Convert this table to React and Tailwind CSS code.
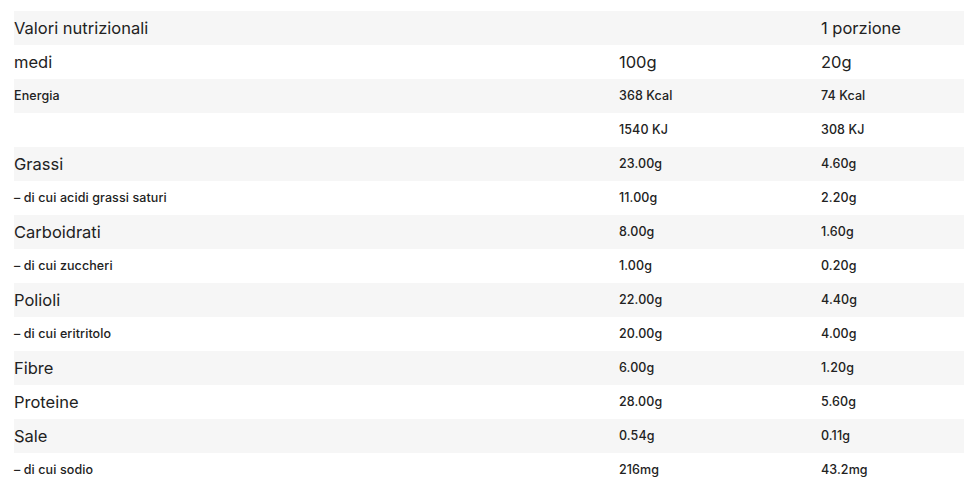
const rows = [
  { label: 'Valori nutrizionali', a: '', b: '1 porzione', big: true },
  { label: 'medi', a: '100g', b: '20g', big: true, bigValues: true },
  { label: 'Energia', a: '368 Kcal', b: '74 Kcal' },
  { label: '', a: '1540 KJ', b: '308 KJ' },
  { label: 'Grassi', a: '23.00g', b: '4.60g', big: true },
  { label: '– di cui acidi grassi saturi', a: '11.00g', b: '2.20g' },
  { label: 'Carboidrati', a: '8.00g', b: '1.60g', big: true },
  { label: '– di cui zuccheri', a: '1.00g', b: '0.20g' },
  { label: 'Polioli', a: '22.00g', b: '4.40g', big: true },
  { label: '– di cui eritritolo', a: '20.00g', b: '4.00g' },
  { label: 'Fibre', a: '6.00g', b: '1.20g', big: true },
  { label: 'Proteine', a: '28.00g', b: '5.60g', big: true },
  { label: 'Sale', a: '0.54g', b: '0.11g', big: true },
  { label: '– di cui sodio', a: '216mg', b: '43.2mg' },
];

export default function App() {
  return (
    <div className="bg-white w-[964px] h-[502px] pt-[11px] pl-[14px] text-[#222]" style={{ fontFamily: 'Inter, "Open Sans", sans-serif' }}>
      <div className="flex flex-col">
        {rows.map((r, i) => {
          const bigVal = r.bigValues || i === 0;
          return (
            <div key={i} className={`flex items-center h-[34px] ${i % 2 === 0 ? 'bg-[#f6f6f6]' : 'bg-white'}`}>
              <div className={`w-[605px] ${r.big ? 'text-[16.5px]' : 'text-[12.5px] font-medium tracking-[0.1px]'}`}>{r.label}</div>
              <div className={`w-[202px] ${bigVal ? 'text-[16.5px]' : 'text-[12.5px] font-medium tracking-[0.1px]'}`}>{r.a}</div>
              <div className={`flex-1 ${bigVal ? 'text-[16.5px]' : 'text-[12.5px] font-medium tracking-[0.1px]'}`}>{r.b}</div>
            </div>
          );
        })}
      </div>
    </div>
  );
}
